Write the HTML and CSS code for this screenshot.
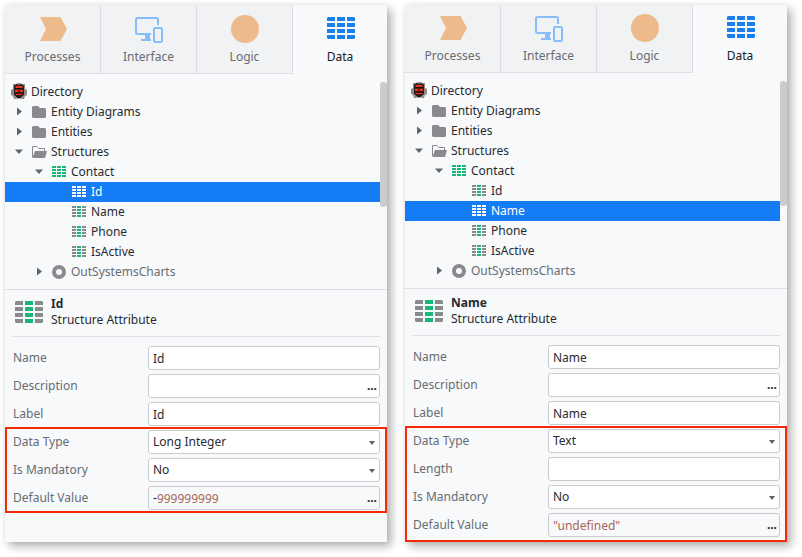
FILE: index.html
```html
<!DOCTYPE html>
<html lang="en">
<head>
<meta charset="utf-8">
<title>Structure attributes</title>
<link rel="stylesheet" href="styles.css">
</head>
<body>
<svg class="sprite" aria-hidden="true">
  <symbol id="i-process" viewBox="0 0 29 28"><path fill="#edba8c" d="M2 2h20.500L29 14l-6.500 12H2l6-12z"/></symbol>
  <symbol id="i-interface" viewBox="0 0 29 28">
    <path fill="none" stroke="#87bef8" stroke-width="2" d="M24 10V4.500Q24 3 22.500 3h-19Q2 3 2 4.500v12.500Q2 19 3.500 19H17"/>
    <path fill="#87bef8" d="M11 19h5v5h1v2H7v-2h4z"/>
    <rect x="20" y="13" width="8" height="14" rx="1.500" fill="none" stroke="#87bef8" stroke-width="2"/>
  </symbol>
  <symbol id="i-logic" viewBox="0 0 29 28"><circle cx="15" cy="14" r="14" fill="#edba8c"/></symbol>
  <symbol id="i-data" viewBox="0 0 29 28">
    <path fill="#1a80f0" d="M2 2h7v4H1V3zM11 2h8v4h-8zM21 2h7l1 1v3h-8zM1 8h8v4H1zM11 8h8v4h-8zM21 8h8v4h-8zM1 14h8v4H1zM11 14h8v4h-8zM21 14h8v4h-8zM1 20h8v4H2l-1-1zM11 20h8v4h-8zM21 20h8v3l-1 1h-7z"/>
  </symbol>
  <symbol id="i-attr-big" viewBox="0 0 28 22">
    <path fill="#898a8d" d="M1 0h7v4H0V1zM20 0h7l1 1v3h-8zM0 6h8v4H0zM20 6h8v4h-8zM0 12h8v4H0zM20 12h8v4h-8zM0 18h8v4H1l-1-1zM20 18h8v3l-1 1h-7z"/>
    <path fill="#17b877" d="M10 0h8v4h-8zM10 6h8v4h-8zM10 12h8v4h-8zM10 18h8v4h-8z"/>
  </symbol>
  <symbol id="i-grid" viewBox="0 0 20 20">
    <path class="side" d="M1 4h4v2H1zM1 7h4v2H1zM1 10h4v2H1zM1 13h4v2H1zM11 4h4v2h-4zM11 7h4v2h-4zM11 10h4v2h-4zM11 13h4v2h-4z"/>
    <path fill="currentColor" d="M6 4h4v2H6zM6 7h4v2H6zM6 10h4v2H6zM6 13h4v2H6z"/>
  </symbol>
  <symbol id="i-right" viewBox="0 0 20 20"><path fill="#5b6672" d="M6 5.500l5 4-5 4z"/></symbol>
  <symbol id="i-down" viewBox="0 0 20 20"><path fill="#5b6672" d="M4 7.500h8l-4 4.500z"/></symbol>
  <symbol id="i-folder" viewBox="0 0 20 20"><path fill="#898a8d" d="M1 5l1-1h5l2 2h5l1 1v8l-1 1H2l-1-1z"/></symbol>
  <symbol id="i-folder-open" viewBox="0 0 20 20">
    <path fill="none" stroke="#898a8d" d="M1.500 15V4.500H6l2 2h5.500V9"/>
    <path fill="#898a8d" d="M4 9h12l-2 7H1.500z"/>
  </symbol>
  <symbol id="i-module" viewBox="0 0 20 20"><circle cx="8" cy="10" r="5" fill="none" stroke="#898a8d" stroke-width="4"/></symbol>
  <symbol id="i-robot" viewBox="0 0 20 20">
    <path fill="#8d8b8a" d="M2 2h3v3L3 7v6l3 4H3l-1-3-2-1V8l2-1zM14 2h-3v3l2 2v6l-3 4h3l1-3 2-1V8l-2-1z"/>
    <path fill="#2c1a18" d="M6 1.500h4L13 4v9l-3 3H6l-3-3V4z"/>
    <path fill="#b0ada9" d="M6 1.500h4v1H6zM5 16h6v1H5z"/>
    <path fill="#6d1b12" d="M4 6h8v7H4z"/>
    <path fill="#e5371c" d="M5 4h6l1 2H4zM4 8h3v2H4zM9 8h3v2H9zM5 12h6v1H5z"/>
    <path fill="#160d0c" d="M4 6h8v1H4zM4 10.500h8v1H4z"/>
  </symbol>
  <symbol id="i-caret" viewBox="0 0 8 4"><path fill="#5b6066" d="M1 0h6L4 4z"/></symbol>
</svg>

<main class="panels">
  <section class="panel">
    <nav class="tabs">
      <button class="tab" type="button"><svg class="tab-icon"><use href="#i-process"/></svg>Processes</button>
      <button class="tab" type="button"><svg class="tab-icon"><use href="#i-interface"/></svg>Interface</button>
      <button class="tab" type="button"><svg class="tab-icon"><use href="#i-logic"/></svg>Logic</button>
      <button class="tab tab-active" type="button"><svg class="tab-icon"><use href="#i-data"/></svg>Data</button>
    </nav>
    <div class="tree">
      <ul class="tree-list">
        <li class="node"><svg><use href="#i-robot"/></svg>Directory</li>
        <li class="node"><svg><use href="#i-right"/></svg><svg><use href="#i-folder"/></svg>Entity Diagrams</li>
        <li class="node"><svg><use href="#i-right"/></svg><svg><use href="#i-folder"/></svg>Entities</li>
        <li class="node"><svg><use href="#i-down"/></svg><svg><use href="#i-folder-open"/></svg>Structures</li>
        <li class="node level-2"><svg><use href="#i-down"/></svg><svg class="grid-entity"><use href="#i-grid"/></svg>Contact</li>
        <li class="node level-3 selected"><svg class="grid-attr"><use href="#i-grid"/></svg>Id</li>
        <li class="node level-3"><svg class="grid-attr"><use href="#i-grid"/></svg>Name</li>
        <li class="node level-3"><svg class="grid-attr"><use href="#i-grid"/></svg>Phone</li>
        <li class="node level-3"><svg class="grid-attr"><use href="#i-grid"/></svg>IsActive</li>
        <li class="node level-2 muted"><svg><use href="#i-right"/></svg><svg><use href="#i-module"/></svg>OutSystemsCharts</li>
      </ul>
      <div class="scroll"><div class="thumb"></div></div>
    </div>
    <header class="props-head">
      <svg class="head-icon"><use href="#i-attr-big"/></svg>
      <div><h2>Id</h2><p>Structure Attribute</p></div>
    </header>
    <form class="props">
      <div class="fields">
        <div class="row"><label for="a-name">Name</label><div class="box"><input id="a-name" value="Id"></div></div>
        <div class="row"><label for="a-desc">Description</label><div class="box"><input id="a-desc"><button class="more" type="button">...</button></div></div>
        <div class="row"><label for="a-label">Label</label><div class="box"><input id="a-label" value="Id"></div></div>
      </div>
      <div class="fields highlight">
        <div class="row"><label for="a-type">Data Type</label><div class="box"><select id="a-type"><option>Long Integer</option></select><svg class="caret"><use href="#i-caret"/></svg></div></div>
        <div class="row"><label for="a-mand">Is Mandatory</label><div class="box"><select id="a-mand"><option>No</option></select><svg class="caret"><use href="#i-caret"/></svg></div></div>
        <div class="row"><label for="a-def">Default Value</label><div class="box expression"><span class="sign">-</span><input id="a-def" value="999999999"><button class="more" type="button">...</button></div></div>
      </div>
    </form>
  </section>

  <section class="panel panel-tight">
    <nav class="tabs">
      <button class="tab" type="button"><svg class="tab-icon"><use href="#i-process"/></svg>Processes</button>
      <button class="tab" type="button"><svg class="tab-icon"><use href="#i-interface"/></svg>Interface</button>
      <button class="tab" type="button"><svg class="tab-icon"><use href="#i-logic"/></svg>Logic</button>
      <button class="tab tab-active" type="button"><svg class="tab-icon"><use href="#i-data"/></svg>Data</button>
    </nav>
    <div class="tree">
      <ul class="tree-list">
        <li class="node"><svg><use href="#i-robot"/></svg>Directory</li>
        <li class="node"><svg><use href="#i-right"/></svg><svg><use href="#i-folder"/></svg>Entity Diagrams</li>
        <li class="node"><svg><use href="#i-right"/></svg><svg><use href="#i-folder"/></svg>Entities</li>
        <li class="node"><svg><use href="#i-down"/></svg><svg><use href="#i-folder-open"/></svg>Structures</li>
        <li class="node level-2"><svg><use href="#i-down"/></svg><svg class="grid-entity"><use href="#i-grid"/></svg>Contact</li>
        <li class="node level-3"><svg class="grid-attr"><use href="#i-grid"/></svg>Id</li>
        <li class="node level-3 selected"><svg class="grid-attr"><use href="#i-grid"/></svg>Name</li>
        <li class="node level-3"><svg class="grid-attr"><use href="#i-grid"/></svg>Phone</li>
        <li class="node level-3"><svg class="grid-attr"><use href="#i-grid"/></svg>IsActive</li>
        <li class="node level-2 muted"><svg><use href="#i-right"/></svg><svg><use href="#i-module"/></svg>OutSystemsCharts</li>
      </ul>
      <div class="scroll"><div class="thumb"></div></div>
    </div>
    <header class="props-head">
      <svg class="head-icon"><use href="#i-attr-big"/></svg>
      <div><h2>Name</h2><p>Structure Attribute</p></div>
    </header>
    <form class="props">
      <div class="fields">
        <div class="row"><label for="b-name">Name</label><div class="box"><input id="b-name" value="Name"></div></div>
        <div class="row"><label for="b-desc">Description</label><div class="box"><input id="b-desc"><button class="more" type="button">...</button></div></div>
        <div class="row"><label for="b-label">Label</label><div class="box"><input id="b-label" value="Name"></div></div>
      </div>
      <div class="fields highlight">
        <div class="row"><label for="b-type">Data Type</label><div class="box"><select id="b-type"><option>Text</option></select><svg class="caret"><use href="#i-caret"/></svg></div></div>
        <div class="row"><label for="b-len">Length</label><div class="box"><input id="b-len"></div></div>
        <div class="row"><label for="b-mand">Is Mandatory</label><div class="box"><select id="b-mand"><option>No</option></select><svg class="caret"><use href="#i-caret"/></svg></div></div>
        <div class="row"><label for="b-def">Default Value</label><div class="box expression"><input id="b-def" value="&quot;undefined&quot;"><button class="more" type="button">...</button></div></div>
      </div>
    </form>
  </section>
</main>
</body>
</html>
```
FILE: styles.css
```css
* { box-sizing: border-box; }

body {
  margin: 0;
  background: #fff;
  color: #272b30;
  font: 12px/18px "Noto Sans", sans-serif;
}

button, input, select { font: inherit; color: inherit; }

.sprite { display: none; }

.panels {
  display: grid;
  grid-template-columns: 1fr 1fr;
  gap: 18px;
  padding: 5px 15px 15px 5px;
}

.panel {
  display: flex;
  flex-direction: column;
  min-width: 0;
  padding-bottom: 29px;
  background: #f7f9fb;
  box-shadow: 4px 4px 9px rgba(0, 0, 0, .32), 0 0 4px rgba(0, 0, 0, .05);
}

.panel-tight { padding-bottom: 0; }

/* Tabs */
.tabs {
  display: grid;
  grid-template-columns: 96fr 96fr 96fr 94fr;
}

.tab {
  display: flex;
  flex-direction: column;
  align-items: center;
  gap: 5px;
  padding: 10px 0 7px;
  border: 0;
  border-right: 1px solid #dcdee1;
  border-bottom: 1px solid #dcdee1;
  background: #f0f2f4;
  color: #676c72;
}

.panel-tight .tab { padding-top: 9px; }

.tab-active,
.tab-active:hover {
  border-color: transparent;
  border-right: 0;
  background: transparent;
  color: #1d2024;
}

.tab-icon { width: 29px; height: 28px; }

/* Tree */
.tree {
  display: flex;
  padding: 8px 0 7px;
  border-bottom: 1px solid #dcdee1;
}

.tree-list {
  flex: 1;
  margin: 0;
  padding: 0;
  list-style: none;
}

.node {
  display: flex;
  align-items: center;
  height: 20px;
  padding-left: 6px;
}

.node svg { width: 20px; height: 20px; }
.level-2 { padding-left: 26px; }
.level-3 { padding-left: 66px; }
.muted { color: #676c72; }

.grid-entity { color: #17b877; fill: #17b877; }
.grid-attr { color: #17b877; fill: #898a8d; }

.selected { background: #147df5; color: #fff; }
.selected .grid-attr { color: #fff; fill: #fff; }

.scroll { width: 7px; }
.thumb {
  height: 125px;
  border-radius: 3px;
  background: #cbccce;
}

/* Properties */
.props-head {
  display: flex;
  align-items: center;
  gap: 8px;
  margin: 0 7px 0 8px;
  padding: 6px 0 8px 2px;
  border-bottom: 1px solid #dcdee1;
  line-height: 16px;
}

.props-head h2, .props-head p { margin: 0; font-size: 12px; }
.head-icon { width: 28px; height: 22px; }

.props {
  display: flex;
  flex: 1;
  flex-direction: column;
  gap: 1px;
  padding-top: 9px;
}

.fields {
  display: grid;
  align-content: start;
  gap: 4px;
  padding: 0 7px 0 8px;
}

.highlight {
  padding: 1px 5px 1px 6px;
  border: 2px solid #f32b06;
}

.panel-tight .highlight { flex: 1; }

.row {
  display: grid;
  grid-template-columns: 135px 1fr;
  align-items: center;
  color: #676c72;
}

.box {
  position: relative;
  display: flex;
  align-items: center;
  min-width: 0;
  height: 24px;
  border: 1px solid #c9cbce;
  border-radius: 3px;
  background: #fff;
  color: #272b30;
}

.box input, .box select {
  flex: 1;
  min-width: 0;
  height: 22px;
  padding: 0 4px;
  border: 0;
  outline: 0;
  background: transparent;
  appearance: none;
}

.expression { background: #f7f9fb; }
.expression input { color: #a8655a; }
.sign { padding-left: 4px; }
.expression .sign + input { padding-left: 0; }

.more {
  padding: 0 2px;
  border: 0;
  background: transparent;
  font-weight: 700;
}

.caret {
  position: absolute;
  top: 10px;
  right: 3px;
  width: 8px;
  height: 4px;
  pointer-events: none;
}
```
